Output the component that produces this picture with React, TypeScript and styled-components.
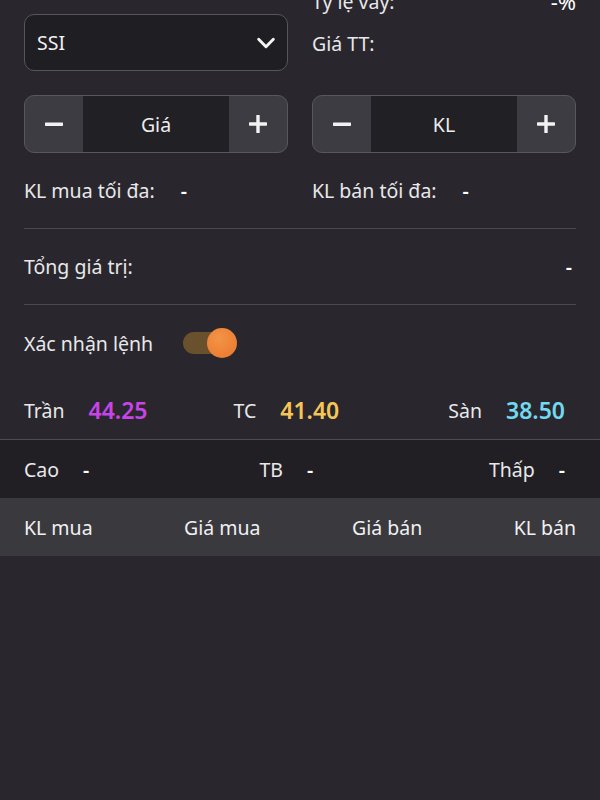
import React from "react";
import styled, { createGlobalStyle } from "styled-components";

const GlobalStyle = createGlobalStyle`
  html, body {
    margin: 0;
    padding: 0;
    background: #29272d;
    height: 100%;
  }
  body {
    font-family: "Noto Sans", "Liberation Sans", sans-serif;
    color: #e8e8ea;
    overflow: hidden;
  }
`;

const Page = styled.div`
  width: 600px;
  min-height: 800px;
  background: #29272d;
  font-size: 19.5px;
`;

const FormArea = styled.div`
  padding: 0 24px;
  margin-top: -20px;
`;

const TopGrid = styled.div`
  display: grid;
  grid-template-columns: 1fr 1fr;
  column-gap: 24px;
  align-items: start;
`;

const SelectBox = styled.div`
  margin-top: 34px;
  height: 57px;
  box-sizing: border-box;
  border: 1px solid #56555b;
  border-radius: 10px;
  background: #1f1e23;
  display: flex;
  align-items: center;
  justify-content: space-between;
  padding: 0 10px 0 12px;
  color: #f2f2f2;
`;

const InfoCol = styled.div`
  display: flex;
  flex-direction: column;
`;

const InfoLine = styled.div`
  height: 42px;
  display: flex;
  align-items: center;
  justify-content: space-between;
`;

const InfoValue = styled.span`
  color: #ffffff;
  font-size: 22px;
`;

const StepperGrid = styled.div`
  display: grid;
  grid-template-columns: 1fr 1fr;
  column-gap: 24px;
  margin-top: 24px;
`;

const Stepper = styled.div`
  height: 58px;
  box-sizing: border-box;
  border: 1px solid #58575d;
  border-radius: 10px;
  background: #3d3c42;
  display: grid;
  grid-template-columns: 58px 1fr 58px;
  overflow: hidden;
`;

const StepButton = styled.div`
  display: flex;
  align-items: center;
  justify-content: center;
`;

const StepValue = styled.div`
  background: #212024;
  display: flex;
  align-items: center;
  justify-content: center;
  color: #ececee;
`;

const Row = styled.div<{ $h: number; $divider?: boolean }>`
  height: ${(p) => p.$h}px;
  display: flex;
  align-items: center;
  border-bottom: ${(p) => (p.$divider ? "1px solid #4a494f" : "none")};
`;

const HalfGrid = styled.div`
  display: grid;
  grid-template-columns: 1fr 1fr;
  column-gap: 24px;
  width: 100%;
`;

const Pair = styled.div<{ $gap: number }>`
  display: flex;
  align-items: center;
  gap: ${(p) => p.$gap}px;
`;

const Dash = styled.span`
  color: #ffffff;
  font-weight: 600;
`;

const SpreadRow = styled(Row)`
  justify-content: space-between;
  padding-right: 4px;
`;

const Toggle = styled.div`
  position: relative;
  width: 50px;
  height: 22px;
  border-radius: 11px;
  background: #6a512d;
  margin-left: 30px;
`;

const Knob = styled.div`
  position: absolute;
  right: -4px;
  top: -4px;
  width: 30px;
  height: 30px;
  border-radius: 50%;
  background: radial-gradient(circle at 40% 35%, #f39446, #e9762b);
`;

const PriceRow = styled.div<{ $bg: string; $border?: boolean }>`
  height: 58px;
  display: grid;
  grid-template-columns: 0.96fr 1fr 1.05fr;
  align-items: center;
  padding: 0 35px 0 24px;
  background: ${(p) => p.$bg};
  border-bottom: ${(p) => (p.$border ? "1px solid #4d4c52" : "none")};
`;

const Cell = styled.div<{ $align: "start" | "center" | "end" }>`
  justify-self: ${(p) => p.$align};
  display: flex;
  align-items: center;
  gap: 24px;
`;

const PriceValue = styled.span<{ $color: string }>`
  color: ${(p) => p.$color};
  font-weight: 600;
  font-size: 23px;
`;

const BookHeader = styled.div`
  height: 58px;
  background: #3a393e;
  display: flex;
  align-items: center;
  justify-content: space-between;
  padding: 0 24px;
  color: #f0f0f2;
`;

const Chevron = () => (
  <svg width="22" height="22" viewBox="0 0 24 24" fill="none">
    <path d="M4 8l8 8 8-8" stroke="#f4f4f4" strokeWidth="3.2" strokeLinecap="round" strokeLinejoin="round" />
  </svg>
);

const Minus = () => (
  <svg width="20" height="20" viewBox="0 0 20 20">
    <rect x="1" y="8.5" width="18" height="3.4" rx="0.6" fill="#f2f2f2" />
  </svg>
);

const Plus = () => (
  <svg width="20" height="20" viewBox="0 0 20 20">
    <rect x="1" y="8.3" width="18" height="3.4" rx="0.6" fill="#f2f2f2" />
    <rect x="8.3" y="1" width="3.4" height="18" rx="0.6" fill="#f2f2f2" />
  </svg>
);

const StepperField: React.FC<{ label: string }> = ({ label }) => (
  <Stepper>
    <StepButton>
      <Minus />
    </StepButton>
    <StepValue>{label}</StepValue>
    <StepButton>
      <Plus />
    </StepButton>
  </Stepper>
);

export default function App() {
  return (
    <Page>
      <GlobalStyle />
      <FormArea>
        <TopGrid>
          <SelectBox>
            <span>SSI</span>
            <Chevron />
          </SelectBox>
          <InfoCol>
            <InfoLine>
              <span>Tỷ lệ vay:</span>
              <InfoValue>-%</InfoValue>
            </InfoLine>
            <InfoLine>
              <span>Giá TT:</span>
            </InfoLine>
          </InfoCol>
        </TopGrid>

        <StepperGrid>
          <StepperField label="Giá" />
          <StepperField label="KL" />
        </StepperGrid>

        <Row $h={75} $divider>
          <HalfGrid>
            <Pair $gap={26}>
              <span>KL mua tối đa:</span>
              <Dash>-</Dash>
            </Pair>
            <Pair $gap={26}>
              <span>KL bán tối đa:</span>
              <Dash>-</Dash>
            </Pair>
          </HalfGrid>
        </Row>

        <SpreadRow $h={75} $divider>
          <span>Tổng giá trị:</span>
          <Dash>-</Dash>
        </SpreadRow>

        <Row $h={76}>
          <span>Xác nhận lệnh</span>
          <Toggle>
            <Knob />
          </Toggle>
        </Row>
      </FormArea>

      <PriceRow $bg="#29272d" $border>
        <Cell $align="start">
          <span>Trần</span>
          <PriceValue $color="#c944e8">44.25</PriceValue>
        </Cell>
        <Cell $align="center">
          <span>TC</span>
          <PriceValue $color="#f6c556">41.40</PriceValue>
        </Cell>
        <Cell $align="end">
          <span>Sàn</span>
          <PriceValue $color="#72d9f0">38.50</PriceValue>
        </Cell>
      </PriceRow>

      <PriceRow $bg="#211f24">
        <Cell $align="start">
          <span>Cao</span>
          <Dash>-</Dash>
        </Cell>
        <Cell $align="center">
          <span>TB</span>
          <Dash>-</Dash>
        </Cell>
        <Cell $align="end">
          <span>Thấp</span>
          <Dash>-</Dash>
        </Cell>
      </PriceRow>

      <BookHeader>
        <span>KL mua</span>
        <span>Giá mua</span>
        <span>Giá bán</span>
        <span>KL bán</span>
      </BookHeader>
    </Page>
  );
}
